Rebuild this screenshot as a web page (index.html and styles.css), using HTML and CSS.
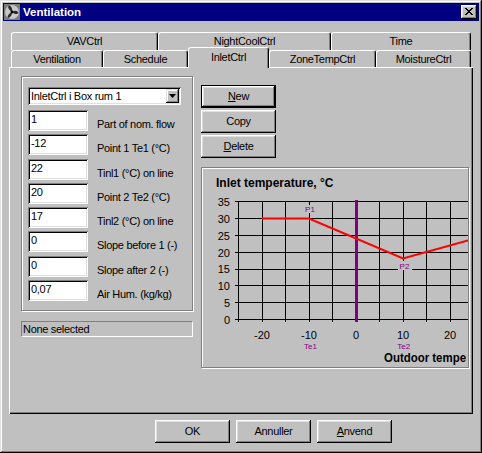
FILE: index.html
```html
<!DOCTYPE html>
<html>
<head>
<meta charset="utf-8">
<title>Ventilation</title>
<link rel="stylesheet" href="styles.css">
</head>
<body>
<div class="window">
  <div class="titlebar">
    <svg class="appicon" viewBox="0 0 16 16">
      <rect width="16" height="16" fill="#7a7a7a"/>
      <circle cx="8" cy="8" r="7" fill="#c8c8c8"/>
      <path d="M8 8C5 6 3 3 5 1.5C7.5 2 8.5 5 8 8Z" fill="#2a2a2a"/>
      <path d="M8 8C11 6 13.5 6.5 14.5 9C13 11 10 10 8 8Z" fill="#2a2a2a"/>
      <path d="M8 8C8 11 6.5 13.5 4 14C3 12 5 9.5 8 8Z" fill="#2a2a2a"/>
      <circle cx="8" cy="8" r="1.4" fill="#000"/>
    </svg>
    <span class="title">Ventilation</span>
    <div class="closebtn">
      <svg class="closex" viewBox="0 0 8 7"><path d="M0 0h2v1H0zM6 0h2v1H6zM1 1h2v1H1zM5 1h2v1H5zM2 2h4v1H2zM3 3h2v1H3zM2 4h4v1H2zM1 5h2v1H1zM5 5h2v1H5zM0 6h2v1H0zM6 6h2v1H6z" fill="#000"/></svg>
    </div>
  </div>

  <div class="body">
    <div class="tabs">
      <div class="tabrow back">
        <div class="tab t-vav">VAVCtrl</div>
        <div class="tab t-night">NightCoolCtrl</div>
        <div class="tab t-time">Time</div>
      </div>
      <div class="tabrow front">
        <div class="tab t-vent">Ventilation</div>
        <div class="tab t-sched">Schedule</div>
        <div class="tab t-inlet sel">InletCtrl</div>
        <div class="tab t-zone">ZoneTempCtrl</div>
        <div class="tab t-moist">MoistureCtrl</div>
      </div>
    </div>

    <div class="panel">
      <div class="leftcol">
        <div class="group">
          <div class="combo">
            <span class="combotext">InletCtrl i Box rum 1</span>
            <div class="dropbtn"><svg class="droparrow" viewBox="0 0 7 4"><path d="M0 0h7L3.5 4z" fill="#000"/></svg></div>
          </div>
          <div class="fields">
            <div class="field"><div class="input">1</div><span class="label">Part of nom. flow</span></div>
            <div class="field"><div class="input">-12</div><span class="label">Point 1 Te1 (°C)</span></div>
            <div class="field"><div class="input">22</div><span class="label">Tinl1 (°C) on line</span></div>
            <div class="field"><div class="input">20</div><span class="label">Point 2 Te2 (°C)</span></div>
            <div class="field"><div class="input">17</div><span class="label">Tinl2 (°C) on line</span></div>
            <div class="field"><div class="input">0</div><span class="label">Slope before 1 (-)</span></div>
            <div class="field"><div class="input">0</div><span class="label">Slope after 2 (-)</span></div>
            <div class="field"><div class="input">0,07</div><span class="label">Air Hum. (kg/kg)</span></div>
          </div>
        </div>
        <div class="status">None selected</div>
      </div>

      <div class="rightcol">
        <div class="btnstack">
          <div class="btn default"><span><u>N</u>ew</span></div>
          <div class="btn">Copy</div>
          <div class="btn"><span><u>D</u>elete</span></div>
        </div>
        <div class="chart">
          <svg class="plot" viewBox="202 168 266 199" width="266" height="199">
            <text x="216" y="187" class="ctitle">Inlet temperature, °C</text>
            <path d="M235 201.5H468M235 218.5H468M235 235.5H468M235 252.5H468M235 269.5H468M235 285.5H468M235 302.5H468M235 319.5H468" stroke="#000" stroke-width="1" fill="none"/>
            <path d="M238.5 201V322M262.5 201V322M285.5 201V322M309.5 201V322M332.5 201V322M379.5 201V322M403.5 201V322M426.5 201V322M450.5 201V322" stroke="#000" stroke-width="1" fill="none"/>
            <path d="M356.5 200V322" stroke="#800080" stroke-width="3" fill="none"/>
            <polyline points="262,218.5 309,218.5 403,258.5 468,240.5" stroke="#ff0000" stroke-width="2" fill="none"/>
            <rect x="305" y="205" width="10" height="8" fill="#c0c0c0"/>
            <text x="310" y="212" class="plab">P1</text>
            <rect x="398" y="261" width="14" height="9" fill="#c0c0c0"/>
            <text x="404.5" y="269" class="plab">P2</text>
            <g class="ylab">
              <text x="230" y="205.5">35</text>
              <text x="230" y="222.5">30</text>
              <text x="230" y="239.5">25</text>
              <text x="230" y="256.5">20</text>
              <text x="230" y="273">15</text>
              <text x="230" y="289.5">10</text>
              <text x="230" y="306.5">5</text>
              <text x="230" y="323.5">0</text>
            </g>
            <g class="xlab">
              <text x="262" y="339">-20</text>
              <text x="309" y="339">-10</text>
              <text x="356" y="339">0</text>
              <text x="403" y="339">10</text>
              <text x="450" y="339">20</text>
            </g>
            <text x="310.5" y="348.5" class="plab">Te1</text>
            <text x="403.7" y="348.5" class="plab">Te2</text>
            <text x="384" y="362" class="ctitle" textLength="82" lengthAdjust="spacingAndGlyphs">Outdoor tempe</text>
          </svg>
        </div>
      </div>
    </div>
  </div>

  <div class="footer">
    <div class="btn">OK</div>
    <div class="btn">Annuller</div>
    <div class="btn"><span><u>A</u>nvend</span></div>
  </div>
</div>
</body>
</html>
```

FILE: styles.css
```css
* { box-sizing: border-box; }
html, body { margin: 0; padding: 0; }
body {
  background: #c0c0c0;
  font-family: "Liberation Sans", Arial, sans-serif;
  font-size: 11px;
  letter-spacing: -0.3px;
  color: #000;
}
.window {
  width: 482px;
  height: 453px;
  padding: 3px;
  background: #c0c0c0;
  box-shadow: inset -1px -1px #000, inset 1px 1px #dfdfdf, inset -2px -2px #808080, inset 2px 2px #fff;
}
.titlebar {
  height: 18px;
  background: #000080;
  display: flex;
  align-items: center;
  padding: 0 2px 0 1px;
}
.appicon { width: 16px; height: 16px; flex: none; display: block; }
.title {
  flex: 1;
  margin-left: 3px;
  color: #fff;
  font-weight: bold;
  font-size: 11.5px;
  letter-spacing: 0;
}
.closebtn {
  width: 16px;
  height: 14px;
  flex: none;
  background: #c0c0c0;
  box-shadow: inset -1px -1px #000, inset 1px 1px #fff, inset -2px -2px #808080, inset 2px 2px #dfdfdf;
  display: flex;
  align-items: center;
  justify-content: center;
  padding: 0 1px 1px 0;
}
.closex { width: 8px; height: 7px; display: block; }

.body { padding: 0 6px; }
.tabs { margin: 11px 2px 0 2px; }
.tabrow { display: flex; }
.tab {
  background: #c0c0c0;
  border-top: 1px solid #fff;
  border-left: 1px solid #fff;
  border-right: 1px solid #000;
  box-shadow: inset -1px 0 #808080;
  border-top-left-radius: 3px;
  border-top-right-radius: 3px;
  display: flex;
  align-items: center;
  justify-content: center;
  flex: none;
  padding-bottom: 1px;
}
.back .tab { height: 18px; }
.front { margin-top: -3px; height: 20px; align-items: flex-start; }
.front .tab { margin-top: 3px; height: 17px; }
.front .tab.sel {
  margin-top: 0;
  height: 21px;
  position: relative;
  z-index: 1;
  padding-bottom: 3px;
}
.t-vav { width: 147px; }
.t-night { width: 173px; }
.t-time { width: 140px; }
.t-vent { width: 92px; }
.t-sched { width: 85px; }
.t-inlet { width: 81px; }
.t-zone { width: 107px; }
.t-moist { width: 95px; }

.panel {
  width: 464px;
  height: 347px;
  padding: 9px 0 0 12px;
  display: flex;
  align-items: flex-start;
  box-shadow: inset 1px 1px #fff, inset -1px -1px #000, inset -2px -2px #808080;
}
.leftcol { width: 172px; flex: none; display: flex; flex-direction: column; }
.group {
  border: 1px solid #808080;
  box-shadow: inset 1px 1px #fff, 1px 1px #fff;
  padding: 10px 6px 9px 6px;
}
.combo {
  width: 153px;
  height: 18px;
  background: #fff;
  box-shadow: inset 1px 1px #808080, inset -1px -1px #fff, inset 2px 2px #000, inset -2px -2px #dfdfdf;
  display: flex;
  align-items: center;
  padding: 2px;
  margin-bottom: 5px;
}
.combotext { flex: 1; padding-left: 1px; }
.dropbtn {
  width: 13px;
  height: 14px;
  background: #c0c0c0;
  box-shadow: inset -1px -1px #000, inset 1px 1px #dfdfdf, inset -2px -2px #808080, inset 2px 2px #fff;
  display: flex;
  align-items: center;
  justify-content: center;
  padding: 0 1px 1px 0;
}
.droparrow { width: 7px; height: 4px; display: block; }
.fields { display: flex; flex-direction: column; gap: 3.3px; }
.field { display: flex; align-items: flex-end; }
.input {
  width: 60px;
  height: 21px;
  flex: none;
  background: #fff;
  box-shadow: inset 1px 1px #808080, inset -1px -1px #fff, inset 2px 2px #000, inset -2px -2px #dfdfdf;
  padding: 3px 0 0 3px;
  line-height: 13px;
}
.label { margin-left: 9px; line-height: 13px; white-space: nowrap; }
.status {
  margin-top: 10px;
  height: 16px;
  border-top: 1px solid #808080;
  border-left: 1px solid #808080;
  border-bottom: 1px solid #fff;
  border-right: 1px solid #fff;
  padding-left: 1px;
  line-height: 14px;
}

.rightcol {
  width: 268px;
  flex: none;
  margin-left: 8px;
  padding-top: 9px;
  display: flex;
  flex-direction: column;
}
.btnstack { display: flex; flex-direction: column; gap: 2px; }
.btn {
  width: 75px;
  height: 23px;
  flex: none;
  background: #c0c0c0;
  box-shadow: inset -1px -1px #000, inset 1px 1px #fff, inset -2px -2px #808080, inset 2px 2px #dfdfdf;
  display: flex;
  align-items: center;
  justify-content: center;
  padding-bottom: 1px;
}
.btn.default {
  box-shadow: inset 0 0 0 1px #000, inset -2px -2px #000, inset 2px 2px #fff, inset -3px -3px #808080, inset 3px 3px #dfdfdf;
}
.chart {
  margin-top: 9px;
  width: 268px;
  height: 201px;
  border: 1px solid #808080;
  box-shadow: 1px 1px #fff, inset 1px 1px #fff;
}
.plot { display: block; }
.plot text { font-family: "Liberation Sans", Arial, sans-serif; letter-spacing: 0; }
.ctitle { font-size: 12px; font-weight: bold; fill: #000; }
.plab { font-size: 8px; fill: #800080; text-anchor: middle; }
.ylab text { font-size: 11px; text-anchor: end; fill: #000; }
.xlab text { font-size: 11px; text-anchor: middle; fill: #000; }

.footer {
  margin-top: 6px;
  padding-left: 152px;
  display: flex;
  gap: 6px;
}
```
